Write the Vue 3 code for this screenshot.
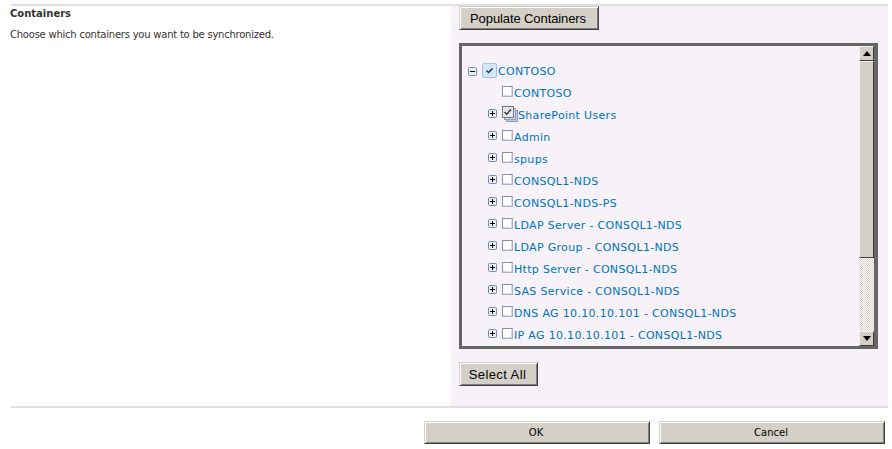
<script setup>
const rows = [
  { text: 'CONTOSO', toggle: 'none' },
  { text: 'SharePoint Users', toggle: 'plus', mixed: true },
  { text: 'Admin', toggle: 'plus' },
  { text: 'spups', toggle: 'plus' },
  { text: 'CONSQL1-NDS', toggle: 'plus' },
  { text: 'CONSQL1-NDS-PS', toggle: 'plus' },
  { text: 'LDAP Server - CONSQL1-NDS', toggle: 'plus' },
  { text: 'LDAP Group - CONSQL1-NDS', toggle: 'plus' },
  { text: 'Http Server - CONSQL1-NDS', toggle: 'plus' },
  { text: 'SAS Service - CONSQL1-NDS', toggle: 'plus' },
  { text: 'DNS AG 10.10.10.101 - CONSQL1-NDS', toggle: 'plus' },
  { text: 'IP AG 10.10.10.101 - CONSQL1-NDS', toggle: 'plus' }
]
</script>

<template>
  <div class="page">
    <section class="section">
      <div class="info">
        <h3>Containers</h3>
        <p>Choose which containers you want to be synchronized.</p>
      </div>
      <div class="panel">
        <button class="btn populate">Populate Containers</button>
        <div class="treebox">
          <div class="tree">
            <div class="row root">
              <svg class="toggle minus" width="9" height="9" viewBox="0 0 9 9">
                <rect x=".5" y=".5" width="8" height="8" rx="1" fill="#e6eef6" stroke="#6d8fb0" />
                <path d="M2 4.5h5" stroke="#000" />
              </svg>
              <svg class="rootcheck" width="15" height="15" viewBox="0 0 15 15">
                <rect x=".5" y=".5" width="14" height="14" rx="1.5" fill="#d3e9fb" stroke="#9cc3e6" />
                <path d="M4.5 7.5l2 2L10.5 5.5" fill="none" stroke="#17375e" stroke-width="1.5" />
              </svg>
              <span class="label">CONTOSO</span>
            </div>
            <div v-for="row in rows" :key="row.text" class="row child">
              <span class="togglecell">
                <svg v-if="row.toggle === 'plus'" width="9" height="9" viewBox="0 0 9 9">
                  <rect x=".5" y=".5" width="8" height="8" rx="1" fill="#e6eef6" stroke="#6d8fb0" />
                  <path d="M2 4.5h5M4.5 2v5" stroke="#000" />
                </svg>
              </span>
              <svg v-if="row.mixed" class="mixed" width="16" height="16" viewBox="0 0 16 16">
                <rect x="4.5" y="4.5" width="11" height="11" fill="#c3c9e0" stroke="#8f9abd" />
                <rect x="2.5" y="2.5" width="11" height="11" fill="#d6dbec" stroke="#8f9abd" />
                <rect x=".5" y=".5" width="11" height="11" fill="#e6e9f3" stroke="#777" />
                <path d="M2.5 6l2.2 2.2L9 3.5" fill="none" stroke="#333" stroke-width="1.4" />
              </svg>
              <span v-else class="box"></span>
              <span class="label">{{ row.text }}</span>
            </div>
          </div>
          <div class="scrollbar">
            <div class="arrow">
              <svg width="8" height="5" viewBox="0 0 8 5"><path d="M4 0l4 5H0z" fill="#000" /></svg>
            </div>
            <div class="thumb"></div>
            <div class="track"></div>
            <div class="arrow">
              <svg width="8" height="5" viewBox="0 0 8 5"><path d="M0 0h8L4 5z" fill="#000" /></svg>
            </div>
          </div>
        </div>
        <button class="btn selectall">Select All</button>
      </div>
    </section>
    <footer class="footer">
      <button class="btn wide">OK</button>
      <button class="btn wide">Cancel</button>
    </footer>
  </div>
</template>

<style>
html, body { margin: 0; background: #fff; }
</style>

<style scoped>
.page {
  width: 892px;
  height: 449px;
  box-sizing: border-box;
  padding: 4px 4px 0 11px;
  overflow: hidden;
  font-family: "DejaVu Sans", Verdana, sans-serif;
}
.section {
  display: flex;
  height: 400px;
  border-top: 2px solid #e0dee0;
  border-bottom: 2px solid #e0dee0;
  box-sizing: content-box;
}
.info {
  flex: none;
  width: 441px;
  margin-left: -1px;
}
.info h3 {
  margin: 1px 0 0;
  font-size: 10px;
  line-height: 13px;
  font-weight: bold;
  color: #333;
}
.info p {
  margin: 8px 0 0;
  font-size: 10px;
  line-height: 13px;
  color: #333;
  letter-spacing: -0.23px;
}
.panel {
  flex: 1;
  background: #f6f2f7;
  padding: 0 10px 0 8px;
  display: flex;
  flex-direction: column;
  align-items: flex-start;
}
.btn {
  box-sizing: border-box;
  padding: 0 2px 0 0;
  background: #d4d0c8;
  border: 1px solid;
  border-color: #d4d0c8 #404040 #404040 #d4d0c8;
  box-shadow: inset 1px 1px 0 #fff, inset -1px -1px 0 #808080;
  color: #000;
  font-family: "Liberation Sans", Arial, sans-serif;
  font-size: 13px;
}
.populate {
  width: 140px;
  height: 24px;
  flex: none;
  letter-spacing: -0.1px;
}
.treebox {
  margin-top: 13px;
  box-sizing: border-box;
  width: 419px;
  height: 306px;
  flex: none;
  border: 3px solid #666;
  border-right-width: 4px;
  display: flex;
  overflow: hidden;
}
.tree {
  flex: 1;
  min-width: 0;
  padding-top: 14px;
  overflow: hidden;
}
.row {
  display: flex;
  align-items: center;
  height: 22px;
}
.root { padding-left: 6px; }
.toggle { flex: none; margin-right: 5px; }
.rootcheck { flex: none; margin-right: 1px; margin-top: -2px; }
.child { padding-left: 26px; }
.togglecell {
  width: 14px;
  flex: none;
  display: flex;
  margin-top: -3px;
}
.box {
  box-sizing: border-box;
  width: 11px;
  height: 11px;
  margin-right: 1px;
  margin-top: -3px;
  flex: none;
  background: #fff;
  border: 1px solid #aab2cc;
  border-top-color: #8a90a8;
  border-left-color: #8a90a8;
  box-shadow: inset -1px -1px 0 #d5d9ea;
}
.mixed { flex: none; margin-top: -3px; }
.label {
  font-size: 11px;
  color: #0072bc;
  white-space: nowrap;
  letter-spacing: 0.32px;
}
.scrollbar {
  width: 15px;
  flex: none;
  display: flex;
  flex-direction: column;
}
.arrow {
  height: 15px;
  flex: none;
  box-sizing: border-box;
  background: #d4d0c8;
  border: 1px solid;
  border-color: #f4f2ee #404040 #404040 #f4f2ee;
  display: flex;
  align-items: center;
  justify-content: center;
}
.thumb {
  height: 197px;
  flex: none;
  box-sizing: border-box;
  background: #d4d0c8;
  border: 1px solid;
  border-color: #f4f2ee #404040 #404040 #f4f2ee;
}
.track {
  flex: 1;
  background: repeating-conic-gradient(#d4d0c8 0 25%, #fff 0 50%) 0 0 / 2px 2px;
}
.selectall {
  width: 79px;
  height: 24px;
  margin-top: 13px;
  flex: none;
  letter-spacing: 0.4px;
}
.footer {
  display: flex;
  justify-content: flex-end;
  gap: 9px;
  padding: 13px 3px 0 0;
}
.wide {
  width: 226px;
  height: 23px;
  font-size: 10px;
  font-family: "DejaVu Sans", Verdana, sans-serif;
}
</style>
